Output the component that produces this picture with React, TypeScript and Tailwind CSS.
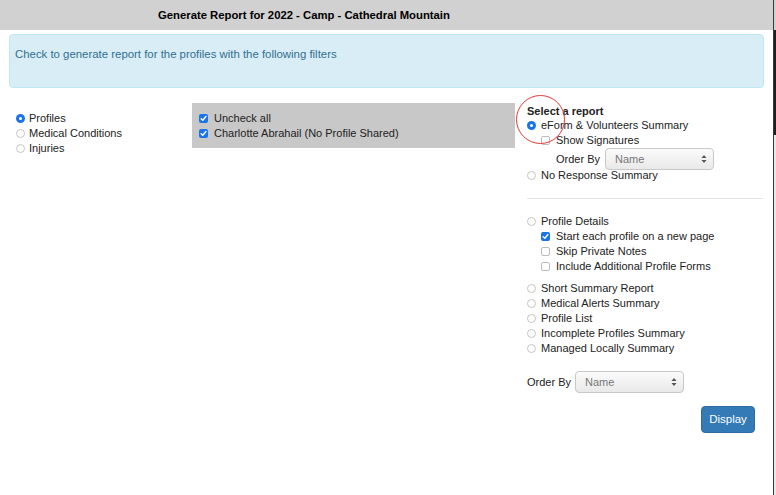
import React from "react";

const font = { fontFamily: '"Liberation Sans", Arial, Helvetica, sans-serif' };

function Radio({ checked = false }: { checked?: boolean }) {
  return checked ? (
    <span className="inline-flex h-[9px] w-[9px] shrink-0 items-center justify-center rounded-full bg-[#1a73e8]">
      <span className="h-[3px] w-[3px] rounded-full bg-white" />
    </span>
  ) : (
    <span className="inline-block h-[9px] w-[9px] shrink-0 rounded-full border border-[#c4c4c4] bg-white" />
  );
}

function Check({ checked = false }: { checked?: boolean }) {
  return checked ? (
    <span className="inline-flex h-[9px] w-[9px] shrink-0 items-center justify-center rounded-[2px] bg-[#1a73e8]">
      <svg width="7" height="7" viewBox="0 0 8 8">
        <path d="M1.3 4.2 L3.2 6 L6.8 1.8" fill="none" stroke="white" strokeWidth="1.6" strokeLinecap="round" strokeLinejoin="round" />
      </svg>
    </span>
  ) : (
    <span className="inline-block h-[9px] w-[9px] shrink-0 rounded-[2px] border border-[#bdbdbd] bg-white" />
  );
}

function Row({ children, control, gap = "gap-[5px]", indent = false }: { children: React.ReactNode; control: React.ReactNode; gap?: string; indent?: boolean }) {
  return (
    <div className={`flex h-[15px] items-center ${gap} ${indent ? "pl-[14px]" : ""}`}>
      {control}
      <span>{children}</span>
    </div>
  );
}

function Select({ width }: { width: string }) {
  return (
    <div
      className={`flex h-[22px] ${width} items-center justify-between rounded-[4px] border border-[#c8c8c8] bg-gradient-to-b from-[#fbfbfb] to-[#e9e9e9] pl-[9px] pr-[6px] text-[#777]`}
    >
      <span>Name</span>
      <svg width="6" height="10" viewBox="0 0 6 10">
        <path d="M0.5 4 L3 1 L5.5 4 Z" fill="#555" />
        <path d="M0.5 6 L3 9 L5.5 6 Z" fill="#555" />
      </svg>
    </div>
  );
}

export default function App() {
  return (
    <div className="relative h-[495px] w-[776px] overflow-hidden bg-white text-[11px] leading-[15px] text-[#222]" style={font}>
      <div className="flex h-full">
        <div className="flex w-[773px] flex-col">
          <div className="flex h-[30px] items-center bg-[#d1d1d1] pl-[158px] text-[11.3px] font-bold text-black">
            Generate Report for 2022 - Camp - Cathedral Mountain
          </div>
          <div className="mx-[9px] mt-[4px] h-[54px] rounded-[4px] border border-[#bce8f1] bg-[#d9edf7] px-[5px] pt-[12px] text-[11.4px] text-[#31708f]">
            Check to generate report for the profiles with the following filters
          </div>
          <div className="flex items-start">
            <div className="w-[192px] pl-[16px] pt-[23px]">
              <Row gap="gap-[4px]" control={<Radio checked />}>Profiles</Row>
              <Row gap="gap-[4px]" control={<Radio />}>Medical Conditions</Row>
              <Row gap="gap-[4px]" control={<Radio />}>Injuries</Row>
            </div>
            <div className="mt-[15px] h-[45px] w-[323px] bg-[#c8c8c8] pl-[7px] pt-[8px]">
              <Row gap="gap-[6px]" control={<Check checked />}>Uncheck all</Row>
              <Row gap="gap-[6px]" control={<Check checked />}>Charlotte Abrahail (No Profile Shared)</Row>
            </div>
            <div className="ml-[12px] w-[236px] pt-[16px]">
              <div className="flex h-[14px] items-center font-bold">Select a report</div>
              <Row control={<Radio checked />}>eForm &amp; Volunteers Summary</Row>
              <Row indent gap="gap-[6px]" control={<Check />}>Show Signatures</Row>
              <div className="flex items-center gap-[5px] pl-[29px]">
                <span>Order By</span>
                <Select width="w-[109px]" />
              </div>
              <div className="-mt-[2px]">
                <Row control={<Radio />}>No Response Summary</Row>
              </div>
              <div className="mt-[15px] border-t border-[#e5e5e5]" />
              <div className="pt-[15px]">
                <Row control={<Radio />}>Profile Details</Row>
                <Row indent gap="gap-[6px]" control={<Check checked />}>Start each profile on a new page</Row>
                <Row indent gap="gap-[6px]" control={<Check />}>Skip Private Notes</Row>
                <Row indent gap="gap-[6px]" control={<Check />}>Include Additional Profile Forms</Row>
              </div>
              <div className="pt-[7px]">
                <Row control={<Radio />}>Short Summary Report</Row>
                <Row control={<Radio />}>Medical Alerts Summary</Row>
                <Row control={<Radio />}>Profile List</Row>
                <Row control={<Radio />}>Incomplete Profiles Summary</Row>
                <Row control={<Radio />}>Managed Locally Summary</Row>
              </div>
              <div className="mt-[15px] flex items-center gap-[4px]">
                <span>Order By</span>
                <Select width="w-[109px]" />
              </div>
              <div className="mt-[13px] flex justify-end pr-[8px]">
                <button className="h-[27px] w-[54px] rounded-[4px] border border-[#2e6da4] bg-[#337ab7] text-[11.5px] text-white">
                  Display
                </button>
              </div>
            </div>
          </div>
        </div>
        <div className="w-[1px] bg-[#3a3a3a]" />
        <div className="flex w-[2px] flex-col">
          <div className="h-[30px] bg-[#d1d1d1]" />
          <div className="h-[105px] bg-[#1e1e1e]" />
          <div className="flex-1 bg-[#e8e8e8]" />
        </div>
      </div>
      <div className="pointer-events-none absolute left-[516px] top-[95px] h-[49px] w-[49px] rounded-full border border-[#e53935]" />
    </div>
  );
}
